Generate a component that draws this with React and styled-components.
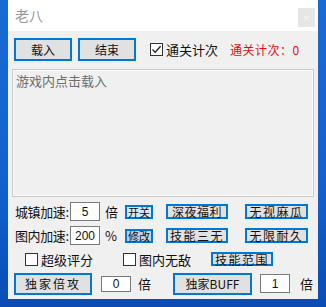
import React, { useState } from 'react';
import styled, { createGlobalStyle } from 'styled-components';

const App = () => {
  const [countOn, setCountOn] = useState(true)
  const [score, setScore] = useState(false)
  const [god, setGod] = useState(false)

  return (
    <>
      <GlobalStyle />
      <Desktop>
        <Window>
          <TitleBar>
            <Title>老八</Title>
            <CloseBox>×</CloseBox>
          </TitleBar>
          <Body>
            <Toolbar>
              <Button w={58}>载入</Button>
              <Button w={58} ml={6}>结束</Button>
              <Check ml={14} onClick={() => setCountOn(!countOn)}>
                <Box>{countOn && <Tick />}</Box>
                <span>通关计次</span>
              </Check>
              <Counter>通关计次：0</Counter>
            </Toolbar>

            <LogBox>游戏内点击载入</LogBox>

            <Row h={19} mt={5}>
              <Label>城镇加速:</Label>
              <Field w={30} h={19}>5</Field>
              <Unit>倍</Unit>
              <SmallBtn>开关</SmallBtn>
              <FlatBtn ml={13} w={62}>深夜福利</FlatBtn>
              <FlatBtn ml={17} w={63} spaced>无视麻瓜</FlatBtn>
            </Row>

            <Row h={19} mt={5}>
              <Label>图内加速:</Label>
              <Field w={30} h={19}>200</Field>
              <Unit>%</Unit>
              <SmallBtn dim>修改</SmallBtn>
              <FlatBtn ml={13} w={62} spaced>技能三无</FlatBtn>
              <FlatBtn ml={17} w={63} spaced>无限耐久</FlatBtn>
            </Row>

            <Row h={18} mt={5}>
              <Check ml={13} onClick={() => setScore(!score)}>
                <Box>{score && <Tick />}</Box>
                <span>超级评分</span>
              </Check>
              <Check ml={30} onClick={() => setGod(!god)}>
                <Box>{god && <Tick />}</Box>
                <span>图内无敌</span>
              </Check>
              <FlatBtn ml={20} w={62} h={14} spaced>技能范围</FlatBtn>
            </Row>

            <Row h={23} mt={4}>
              <Button w={78} h={22} ml={2} spaced>独家倍攻</Button>
              <Field w={30} h={16} ml={9}>0</Field>
              <Unit ml={7}>倍</Unit>
              <Button w={79} h={22} ml={15}>独家BUFF</Button>
              <Field w={30} h={19} ml={8}>1</Field>
              <Unit ml={10}>倍</Unit>
            </Row>
          </Body>
        </Window>
      </Desktop>
    </>
  )
}

const Tick = () => (
  <svg width="11" height="11" viewBox="0 0 11 11">
    <path d="M1.5 5.5 L4.2 8.3 L9.6 2.2" fill="none" stroke="#222" strokeWidth="1.3" />
  </svg>
)

export default App;

//style

const GlobalStyle = createGlobalStyle`
  html, body {
    margin: 0;
    padding: 0;
    width: 326px;
    height: 307px;
    overflow: hidden;
  }
  body {
    font-family: "Noto Sans CJK SC", "Liberation Sans", sans-serif;
    background: #0b55c4;
  }
`

const Desktop = styled.div`
  width: 326px;
  height: 307px;
  padding-left: 8px;
  box-sizing: border-box;
  background: linear-gradient(180deg, #1a6ad6 0%, #1261cf 60%, #0a4cb4 100%);
`

const Window = styled.div`
  width: 310px;
  height: 299px;
  display: flex;
  flex-direction: column;
  background: #f0f0f0;
`

const TitleBar = styled.div`
  height: 31px;
  flex: none;
  background: #fff;
  display: flex;
  align-items: center;
  padding-left: 7px;
`

const Title = styled.div`
  font-size: 14px;
  color: #9a9a9a;
  margin-top: -2px;
`

const CloseBox = styled.div`
  margin-left: auto;
  margin-right: 3px;
  width: 17px;
  height: 19px;
  background: #e6e6e6;
  color: #f6f6f6;
  font-family: "Liberation Sans", sans-serif;
  font-size: 11px;
  display: flex;
  align-items: center;
  justify-content: center;
  margin-top: 4px;
`

const Body = styled.div`
  flex: 1;
  padding: 7px 4px 0 4px;
`

const Toolbar = styled.div`
  display: flex;
  align-items: center;
  height: 23px;
  padding-left: 2px;
`

const Button = styled.div`
  box-sizing: border-box;
  width: ${p => p.w}px;
  height: ${p => p.h || 23}px;
  margin-left: ${p => p.ml || 0}px;
  border: 2px solid #0078d7;
  background: #e1e1e1;
  display: flex;
  align-items: center;
  justify-content: center;
  font-size: 12px;
  letter-spacing: ${p => p.spaced ? 2 : 0}px;
  color: #111;
  flex: none;
`

const Check = styled.label`
  display: flex;
  align-items: center;
  margin-left: ${p => p.ml || 0}px;
  font-size: 13px;
  color: #111;
  cursor: default;
  flex: none;
  white-space: nowrap;
  span {
    margin-left: 3px;
  }
`

const Box = styled.div`
  box-sizing: border-box;
  width: 13px;
  height: 13px;
  border: 1px solid #333;
  background: #fff;
  display: flex;
  align-items: center;
  justify-content: center;
`

const Counter = styled.div`
  margin-left: 12px;
  font-size: 12px;
  color: #e01010;
  letter-spacing: 0.5px;
  white-space: nowrap;
`

const LogBox = styled.div`
  margin-top: 8px;
  height: 128px;
  box-sizing: border-box;
  border: 1px solid #c9c9c9;
  box-shadow: inset 0 0 0 1px #fbfbfb;
  background: #f0f0f0;
  padding: 1px 3px;
  font-size: 13px;
  color: #6d6d6d;
`

const Row = styled.div`
  display: flex;
  align-items: center;
  height: ${p => p.h}px;
  margin-top: ${p => p.mt}px;
`

const Label = styled.div`
  width: 55px;
  margin-left: 3px;
  font-size: 13px;
  letter-spacing: -0.4px;
  color: #111;
  flex: none;
  white-space: nowrap;
`

const Field = styled.div`
  box-sizing: border-box;
  width: ${p => p.w}px;
  height: ${p => p.h}px;
  margin-left: ${p => p.ml || 0}px;
  border: 1px solid #7a7a7a;
  background: #fff;
  display: flex;
  align-items: center;
  justify-content: center;
  font-family: "Liberation Sans", sans-serif;
  font-size: 12px;
  color: #111;
  flex: none;
`

const Unit = styled.div`
  width: 20px;
  margin-left: ${p => p.ml || 5}px;
  font-size: 13px;
  color: #111;
  flex: none;
`

const SmallBtn = styled.div`
  box-sizing: border-box;
  width: 28px;
  height: 14px;
  border: 2px solid #0078d7;
  background: ${p => p.dim ? '#c3d3e3' : '#d6e8f8'};
  display: flex;
  align-items: center;
  justify-content: center;
  font-size: 11px;
  color: #111;
  flex: none;
  white-space: nowrap;
`

const FlatBtn = styled.div`
  box-sizing: border-box;
  width: ${p => p.w}px;
  height: ${p => p.h || 15}px;
  margin-left: ${p => p.ml || 0}px;
  border: 2px solid #0078d7;
  background: #e1e1e1;
  display: flex;
  align-items: center;
  justify-content: center;
  font-size: 12px;
  letter-spacing: ${p => p.spaced ? 1.5 : 0.5}px;
  color: #111;
  flex: none;
  white-space: nowrap;
`
